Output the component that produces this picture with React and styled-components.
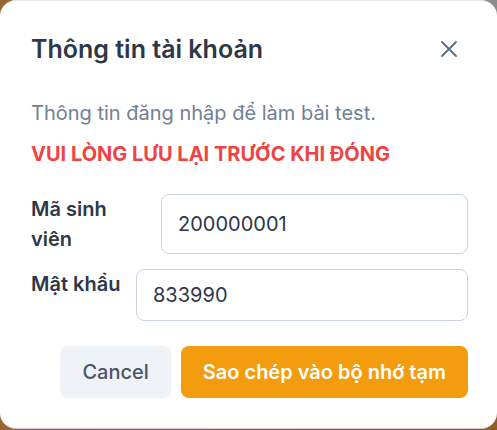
import React from "react";
import styled, { createGlobalStyle } from "styled-components";

const Global = createGlobalStyle`
  html, body { margin: 0; padding: 0; }
  body {
    width: 497px;
    height: 430px;
    overflow: hidden;
    background: radial-gradient(circle at 100% 0%, #8c8c8c 0, #8c8c8c 22px, transparent 40px),
      linear-gradient(90deg, #9a6534 0%, #8d5d2a 100%);
    font-family: Inter, "Noto Sans", sans-serif;
  }
`;

const Modal = styled.div`
  box-sizing: border-box;
  width: 497px;
  height: 429px;
  background: #fff;
  border-radius: 16px;
  border-top: 1px solid #e4e8ef;
  border-bottom: 1px solid #c9ced6;
  display: flex;
  flex-direction: column;
  padding: 0 29px 0 31px;
`;

const Header = styled.div`
  display: flex;
  align-items: center;
  justify-content: space-between;
  height: 98px;
  padding-bottom: 2px;
  box-sizing: border-box;
`;

const Title = styled.h2`
  margin: 0;
  font-size: 25px;
  line-height: 34px;
  font-weight: 600;
  color: #2d3748;
`;

const CloseButton = styled.button`
  border: none;
  background: transparent;
  width: 36px;
  height: 36px;
  display: flex;
  align-items: center;
  justify-content: center;
  padding: 0;
  margin-right: 1px;
  cursor: pointer;
`;

const Description = styled.p`
  margin: 0;
  font-size: 20px;
  line-height: 28px;
  color: #718096;
`;

const Warning = styled.p`
  margin: 13px 0 0;
  font-size: 20px;
  line-height: 28px;
  font-weight: 700;
  color: #ef4444;
`;

const Form = styled.div`
  display: flex;
  flex-direction: column;
  gap: 15px;
  margin-top: 26px;
`;

const Row = styled.div`
  display: flex;
  gap: 15px;
  align-items: stretch;
`;

const Label = styled.label`
  flex: 0 0 ${(p) => p.$w}px;
  font-size: 20px;
  line-height: 30px;
  font-weight: 600;
  color: #2d3748;
`;

const Input = styled.input`
  flex: 1;
  min-width: 0;
  box-sizing: border-box;
  min-height: 52px;
  border: 1px solid #cbd5e0;
  border-radius: 8px;
  padding: 0 16px;
  font-family: inherit;
  font-size: 20px;
  color: #2d3748;
  background: #fff;
  outline: none;
`;

const Footer = styled.div`
  display: flex;
  justify-content: flex-end;
  gap: 10px;
  margin-top: 25px;
`;

const Button = styled.button`
  height: 52px;
  padding: 0 22px;
  border: none;
  border-radius: 8px;
  font-family: inherit;
  font-size: 20px;
  font-weight: ${(p) => (p.$primary ? 600 : 500)};
  background: ${(p) => (p.$primary ? "#f39c0e" : "#eff2f7")};
  color: ${(p) => (p.$primary ? "#ffffff" : "#4a5568")};
  cursor: pointer;
`;

export default function App() {
  return (
    <>
      <Global />
      <Modal>
        <Header>
          <Title>Thông tin tài khoản</Title>
          <CloseButton aria-label="Close">
            <svg width="18" height="18" viewBox="0 0 18 18">
              <path d="M2 2 L16 16 M16 2 L2 16" stroke="#5a6a84" strokeWidth="1.8" strokeLinecap="round" />
            </svg>
          </CloseButton>
        </Header>
        <Description>Thông tin đăng nhập để làm bài test.</Description>
        <Warning>VUI LÒNG LƯU LẠI TRƯỚC KHI ĐÓNG</Warning>
        <Form>
          <Row>
            <Label $w={115}>Mã sinh viên</Label>
            <Input defaultValue="200000001" />
          </Row>
          <Row>
            <Label $w={90}>Mật khẩu</Label>
            <Input defaultValue="833990" />
          </Row>
        </Form>
        <Footer>
          <Button>Cancel</Button>
          <Button $primary>Sao chép vào bộ nhớ tạm</Button>
        </Footer>
      </Modal>
    </>
  );
}
